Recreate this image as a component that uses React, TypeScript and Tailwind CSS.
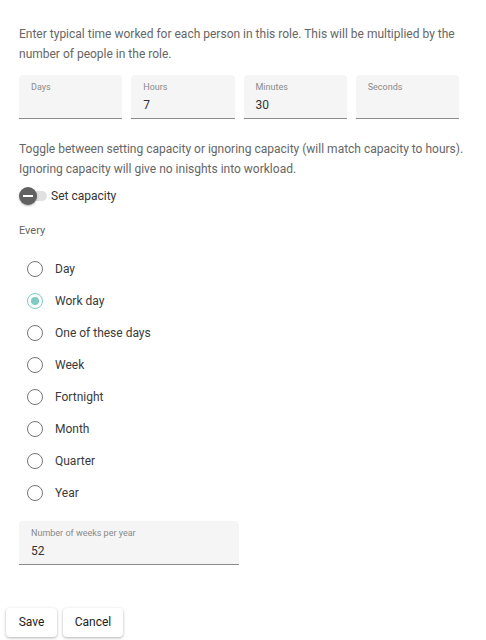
import React from "react";

const font = { fontFamily: "Roboto, 'Liberation Sans', sans-serif" };

function Field({ label, value, className = "" }: { label: string; value?: string; className?: string }) {
  return (
    <div className={`h-[44px] rounded-t-[4px] bg-[#f5f5f5] border-b border-[#8c8c8c] px-3 pt-[7px] ${className}`}>
      <div className="text-[9px] leading-[11px] text-[#8a8a8a]">{label}</div>
      <div className="mt-[5px] text-[12px] leading-[14px] text-[#333]">{value ?? "\u00a0"}</div>
    </div>
  );
}

function Radio({ label, checked }: { label: string; checked?: boolean }) {
  return (
    <label className="flex h-[32px] items-center">
      <span
        className={`ml-[8px] flex h-[16px] w-[16px] items-center justify-center rounded-full border-[1.5px] ${
          checked ? "border-[#80cbc4]" : "border-[#757575]"
        }`}
      >
        {checked && <span className="h-[8px] w-[8px] rounded-full bg-[#80cbc4]" />}
      </span>
      <span className="ml-[12px] text-[12px] text-[#3a3a3a]">{label}</span>
    </label>
  );
}

const periods = ["Day", "Work day", "One of these days", "Week", "Fortnight", "Month", "Quarter", "Year"];

export default function App() {
  return (
    <div className="min-h-[640px] bg-white" style={font}>
      <div className="px-[19px] pt-[24px]">
        <p className="w-[450px] text-[12px] leading-[20px] text-[#666]">
          Enter typical time worked for each person in this role. This will be multiplied by the number of people in
          the role.
        </p>

        <div className="mt-[11px] grid w-[440px] grid-cols-4 gap-[9px]">
          <Field label="Days" />
          <Field label="Hours" value="7" />
          <Field label="Minutes" value="30" />
          <Field label="Seconds" />
        </div>

        <p className="mt-[20px] w-[450px] text-[12px] leading-[20px] text-[#666]">
          Toggle between setting capacity or ignoring capacity (will match capacity to hours). Ignoring capacity will
          give no inisghts into workload.
        </p>

        <div className="mt-[7px] flex items-center">
          <div className="relative h-[20px] w-[30px]">
            <div className="absolute left-[8px] top-[5px] h-[10px] w-[20px] rounded-full bg-[#e0e0e0]" />
            <div className="absolute left-0 top-[1px] flex h-[18px] w-[18px] items-center justify-center rounded-full bg-[#616161] shadow-[0_1px_2px_rgba(0,0,0,0.3)]">
              <div className="h-[2px] w-[10px] bg-white" />
            </div>
          </div>
          <span className="ml-[2px] text-[12px] text-[#333]">Set capacity</span>
        </div>

        <div className="mt-[17px] text-[11px] text-[#666]">Every</div>

        <div className="mt-[13px] flex flex-col">
          {periods.map((p) => (
            <Radio key={p} label={p} checked={p === "Work day"} />
          ))}
        </div>

        <Field label="Number of weeks per year" value="52" className="mt-[12px] w-[220px]" />
      </div>

      <div className="mt-[43px] flex gap-[6px] pl-[6px]">
        <button className="h-[29px] w-[51px] rounded-[4px] bg-white text-[12px] text-[#222] shadow-[0_1px_3px_rgba(0,0,0,0.3)]">
          Save
        </button>
        <button className="h-[29px] w-[60px] rounded-[4px] bg-white text-[12px] text-[#222] shadow-[0_1px_3px_rgba(0,0,0,0.3)]">
          Cancel
        </button>
      </div>
    </div>
  );
}
